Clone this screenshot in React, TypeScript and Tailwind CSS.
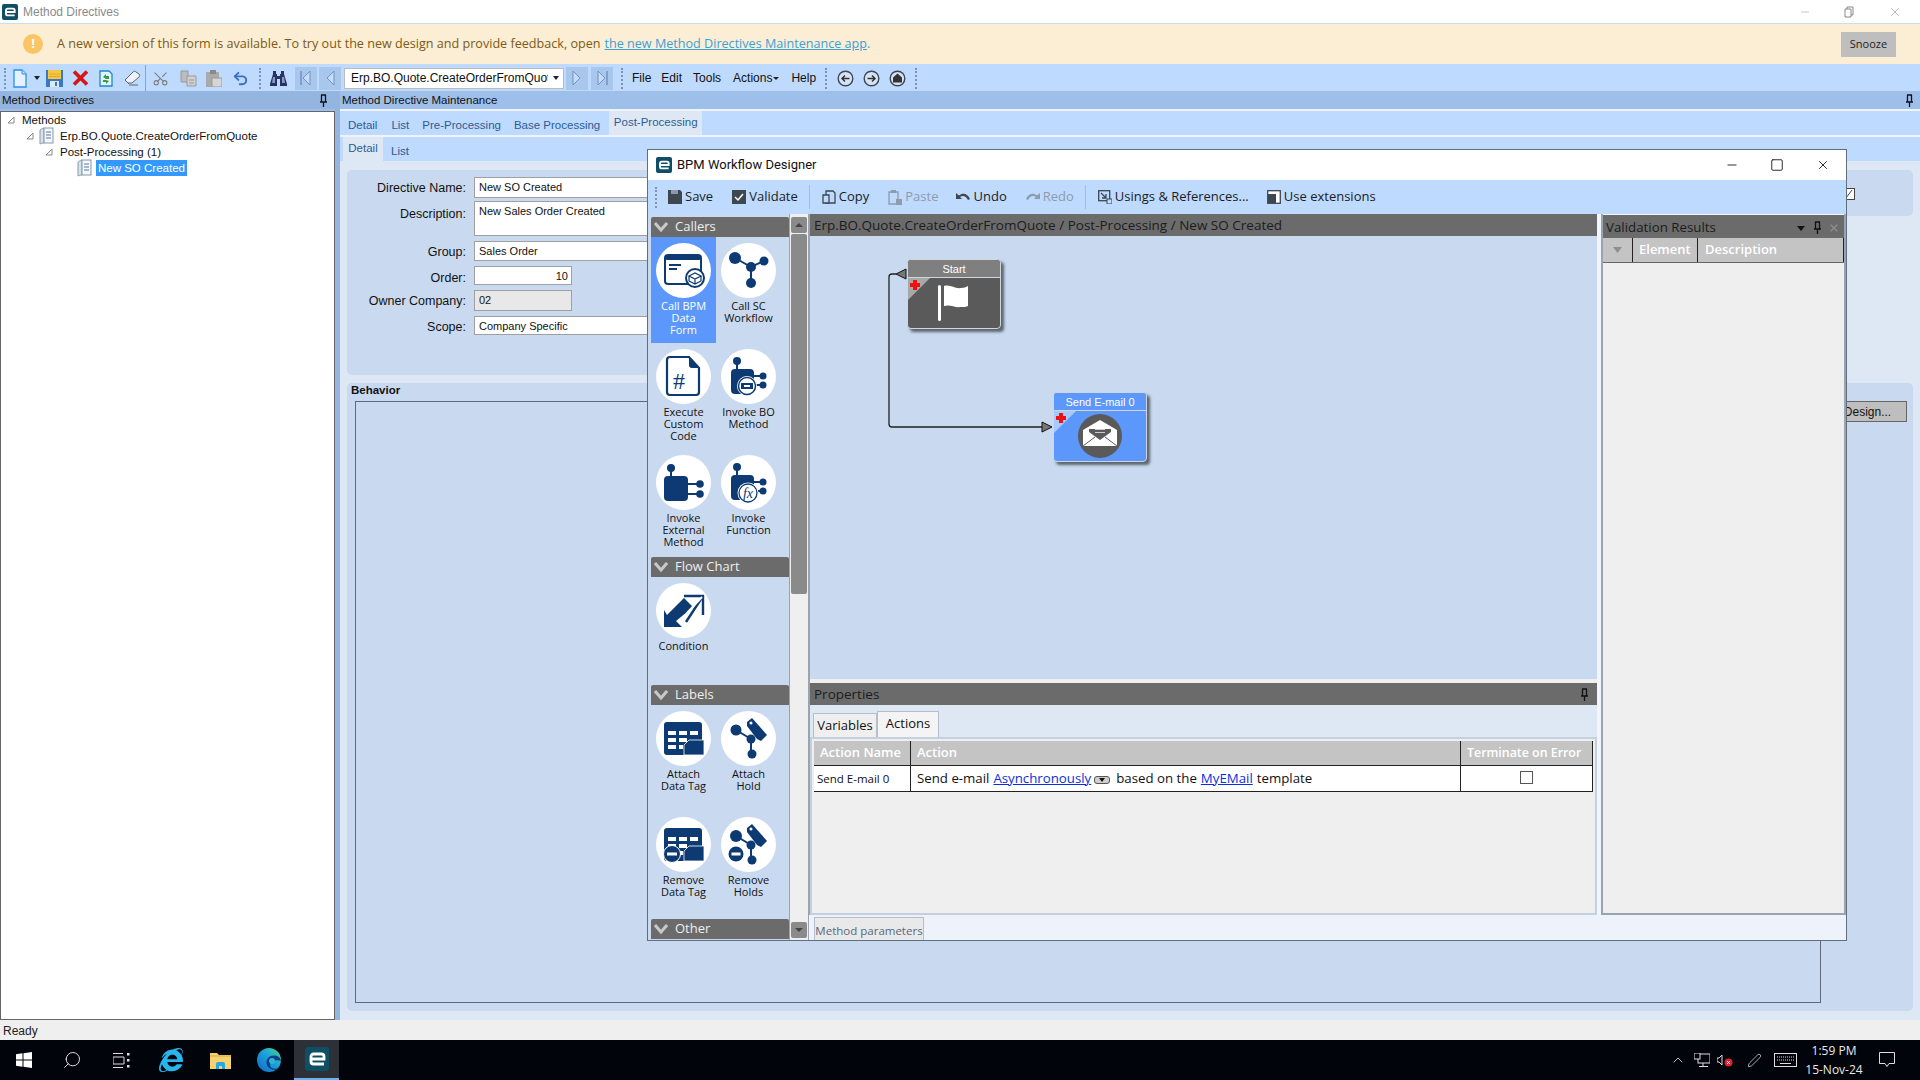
import { Scissors, Undo2, ChevronUp, X, Minus, Square, Search, Pen } from "lucide-react"
import { FaInternetExplorer } from "react-icons/fa"
import type { ReactNode } from "react"

const NAVY = "#0d3a72"

// ---- small shared bits ----

function EpicorLogo({ size = 16 }: { size?: number }) {
  return (
    <svg width={size} height={size} viewBox="0 0 24 24">
      <rect width="24" height="24" rx="3" fill="#0e4f63" />
      <path d="M6 12h13V9.500A2.500 2.500 0 0 0 16.500 7h-8A2.500 2.500 0 0 0 6 9.500v5A2.500 2.500 0 0 0 8.500 17H19" fill="none" stroke="#fff" strokeWidth="2.800" />
    </svg>
  )
}

function PinIcon({ color = "#111" }: { color?: string }) {
  return (
    <svg width="9" height="13" viewBox="0 0 9 13">
      <path d="M2 1h5M2.500 1v7M6.500 1v7M1 8h7M4.500 8v5" fill="none" stroke={color} strokeWidth="1.300" />
    </svg>
  )
}

function TreeArrow() {
  return (
    <svg width="8" height="8" viewBox="0 0 8 8" className="shrink-0">
      <path d="M7 1v6H1z" fill="#fff" stroke="#8a8a8a" />
    </svg>
  )
}

function BookIcon() {
  return (
    <svg width="15" height="18" viewBox="0 0 15 18" className="shrink-0">
      <path d="M1 3c1-1 2-1 4-2v15c-2 0-3 .5-4 1z" fill="#d8e2ee" stroke="#8899aa" />
      <rect x="5" y="1" width="9" height="15" fill="#f4f7fb" stroke="#8899aa" />
      <path d="M7 5h5M7 8h5M7 11h5" stroke="#5577aa" />
    </svg>
  )
}

function Grip() {
  return <div className="h-[21px] w-[2px] shrink-0 border-l-2 border-dotted border-[#7f93ad]" />
}

function Sep({ h = 21, color = "#a7bcd6" }: { h?: number; color?: string }) {
  return <div className="w-px shrink-0" style={{ height: h, backgroundColor: color }} />
}

// ---- main toolbar icons ----

function TbBtn({ w = 26, children }: { w?: number; children: ReactNode }) {
  return <div className="flex h-[26px] shrink-0 items-center justify-center" style={{ width: w }}>{children}</div>
}

function NavBox({ children }: { children: ReactNode }) {
  return <div className="flex h-[23px] w-[22px] shrink-0 items-center justify-center bg-[#a9c6ec]">{children}</div>
}

function NavArrow({ dir, bar }: { dir: "l" | "r"; bar?: boolean }) {
  return (
    <svg width="14" height="18" viewBox="0 0 14 18">
      {dir === "l" ? <path d="M11 2v14L4 9z" fill="#c6dcf8" stroke="#6f93c4" /> : <path d="M3 2v14l7-7z" fill="#c6dcf8" stroke="#6f93c4" />}
      {bar && <path d={dir === "l" ? "M2 2v14" : "M12 2v14"} stroke="#6f93c4" strokeWidth="1.500" />}
    </svg>
  )
}

function CircleNav({ kind }: { kind: "back" | "fwd" | "home" }) {
  return (
    <svg width="17" height="17" viewBox="0 0 17 17">
      <circle cx="8.500" cy="8.500" r="7.300" fill="#d5e4f8" stroke="#3e4650" strokeWidth="1.400" />
      {kind === "back" && <path d="M12.500 8.500H5M8 5.500l-3 3 3 3" fill="none" stroke="#333" strokeWidth="1.500" />}
      {kind === "fwd" && <path d="M4.500 8.500H12M9 5.500l3 3-3 3" fill="none" stroke="#333" strokeWidth="1.500" />}
      {kind === "home" && <path d="M8.500 3.500l4.500 4v5H4v-5z" fill="#333" />}
    </svg>
  )
}

function MainToolbar() {
  return (
    <div className="flex h-[27px] shrink-0 items-center bg-[#bedaff] pt-px pl-[4px] text-[12px] text-[#111]">
      <Grip />
      <TbBtn w={27}>
        <svg width="14" height="19" viewBox="0 0 14 19"><path d="M1 1h8l4 4v13H1z" fill="#e6f2ff" stroke="#2a8fe8" strokeWidth="1.300" /><path d="M9 1v4h4" fill="#cfe4fb" stroke="#2a8fe8" /></svg>
      </TbBtn>
      <TbBtn w={8}><svg width="6" height="4" viewBox="0 0 6 4"><path d="M0 0h6L3 4z" fill="#222" /></svg></TbBtn>
      <TbBtn>
        <svg width="17" height="17" viewBox="0 0 17 17"><rect x="0" y="0" width="17" height="17" fill="#3b78c4" /><rect x="2" y="0" width="13" height="9" fill="#f5c842" /><path d="M3 4h11M3 6.500h11" stroke="#e8a52a" /><rect x="4" y="11" width="9" height="6" fill="#dfe8f2" /><rect x="9" y="12" width="2" height="4" fill="#3b78c4" /></svg>
      </TbBtn>
      <TbBtn>
        <svg width="17" height="16" viewBox="0 0 17 16"><path d="M2 1.500l13 13M15 1.500L2 14.500" stroke="#d81515" strokeWidth="3.600" /></svg>
      </TbBtn>
      <TbBtn>
        <svg width="14" height="17" viewBox="0 0 14 17"><path d="M1 1h9l3 3v12H1z" fill="#e4f3fb" stroke="#1c86d0" strokeWidth="1.300" /><path d="M4 7l3-3v2h3v3H7v0zM10 11l-3 3v-2H4v-2h3z" fill="#2f9e44" /></svg>
      </TbBtn>
      <TbBtn>
        <svg width="17" height="16" viewBox="0 0 17 16"><path d="M1 10l8-8c1-1 2-1 3 0l3 2c1 1 1 2 0 3l-7 6H4z" fill="#eef1f5" stroke="#5d6774" /><path d="M1 10l4 4M5 15h9" stroke="#5d6774" /></svg>
      </TbBtn>
      <Sep h={26} color="#8ea3bd" />
      <TbBtn w={29}><Scissors size={17} color="#7d7d7d" strokeWidth={1.500} className="-rotate-90" /></TbBtn>
      <TbBtn>
        <svg width="17" height="17" viewBox="0 0 17 17"><path d="M1 1h7v11H1z" fill="#bcbcbc" stroke="#999" /><path d="M7 6h9v10H7z" fill="#d0d0d0" stroke="#999" /><path d="M9 10h5M9 13h5" stroke="#999" /></svg>
      </TbBtn>
      <TbBtn>
        <svg width="16" height="17" viewBox="0 0 16 17"><rect x="0" y="2" width="13" height="15" fill="#aaa" /><rect x="4" y="0" width="6" height="4" fill="#8a8a8a" /><rect x="6" y="8" width="10" height="9" fill="#d6d6d6" stroke="#999" /></svg>
      </TbBtn>
      <TbBtn w={27}><Undo2 size={17} color="#3f6fc0" strokeWidth={2.800} /></TbBtn>
      <div className="flex w-[12px] shrink-0 justify-center"><Grip /></div>
      <TbBtn w={24}>
        <svg width="17" height="15" viewBox="0 0 17 15"><path d="M3 0h3v3h1v2h3V3h1V0h3v3l3 10v2h-7V8H7v7H0v-2L3 3z" fill="#2a3360" /><path d="M3 6l-1 6h3V6zM12 6v6h3l-1-6z" fill="#8d97c4" /></svg>
      </TbBtn>
      <div className="ml-[5px] flex gap-[2px]">
        <NavBox><NavArrow dir="l" bar /></NavBox>
        <NavBox><NavArrow dir="l" /></NavBox>
      </div>
      <div className="ml-[3px] flex h-[21px] w-[220px] shrink-0 items-center border border-[#bbb] bg-white pl-[6px] text-[12px]">
        <span className="w-[197px] overflow-hidden whitespace-nowrap">Erp.BO.Quote.CreateOrderFromQuote</span>
        <svg width="6" height="4" viewBox="0 0 6 4" className="ml-[5px]"><path d="M0 0h6L3 4z" fill="#222" /></svg>
      </div>
      <div className="ml-[2px] flex gap-[3px]">
        <NavBox><NavArrow dir="r" /></NavBox>
        <NavBox><NavArrow dir="r" bar /></NavBox>
      </div>
      <div className="ml-[8px]"><Grip /></div>
      <span className="ml-[9px]">File</span>
      <span className="ml-[10px]">Edit</span>
      <span className="ml-[11px]">Tools</span>
      <span className="ml-[12px] flex items-center gap-[1px]">Actions<svg width="6" height="3" viewBox="0 0 6 3"><path d="M0 0h6L3 3z" fill="#222" /></svg></span>
      <span className="ml-[12px]">Help</span>
      <div className="ml-[9px]"><Grip /></div>
      <div className="ml-[10px] flex gap-[9px]">
        <CircleNav kind="back" />
        <CircleNav kind="fwd" />
        <CircleNav kind="home" />
      </div>
      <div className="ml-[9px]"><Grip /></div>
    </div>
  )
}

// ---- method directive form ----

function Field({ label, h, mt, lift = 0, children }: { label: string; h: number; mt: number; lift?: number; children: ReactNode }) {
  return (
    <div className="flex items-start gap-[8px]" style={{ marginTop: mt, height: h }}>
      <div className="w-[119px] text-right text-[12.500px] leading-[14px] text-[#111]" style={{ paddingTop: 4 + lift }}>{label}</div>
      {children}
    </div>
  )
}

function Input({ children, w = 600, className = "bg-white" }: { children: ReactNode; w?: number; className?: string }) {
  return <div className={`h-full border border-[#a0a0a0] pt-[1px] pl-[4px] text-[11px] leading-[16px] text-[#111] ${className}`} style={{ width: w }}>{children}</div>
}

function FormArea() {
  return (
    <div className="flex min-h-0 flex-1 flex-col bg-[#dee8f5] pt-[9px] pr-[7px] pb-[9px] pl-[7px]">
      <div className="flex items-start">
        <div className="h-[205px] w-[900px] shrink-0 rounded-[5px] bg-[#c9daf0] pt-[7px]">
          <Field label="Directive Name:" h={21} mt={0}><Input>New SO Created</Input></Field>
          <Field label="Description:" h={35} mt={4} lift={1}><Input className="-mt-px bg-white">New Sales Order Created</Input></Field>
          <Field label="Group:" h={20} mt={4}><Input>Sales Order</Input></Field>
          <Field label="Order:" h={19} mt={5} lift={1}><Input w={98} className="bg-white pr-[3px] text-right">10</Input></Field>
          <Field label="Owner Company:" h={21} mt={5}><Input w={98} className="bg-[#e8e8e8]">02</Input></Field>
          <Field label="Scope:" h={19} mt={5}><Input>Company Specific</Input></Field>
        </div>
        <div className="flex h-[46px] flex-1 items-start justify-end rounded-[5px] bg-[#c9daf0] pt-[18px] pr-[58px]">
          <svg width="12" height="12" viewBox="0 0 12 12"><rect x=".5" y=".5" width="11" height="11" fill="#fff" stroke="#444" /><path d="M3 10l6-8" stroke="#444" /></svg>
        </div>
      </div>
      <div className="mt-[8px] flex min-h-0 flex-1 flex-col rounded-[5px] bg-[#c9daf0]">
        <div className="h-[18px] pl-[4px] text-[11.500px] leading-[14px] font-bold text-[#111]">Behavior</div>
        <div className="flex min-h-0 flex-1 pb-[8px] pl-[8px]">
          <div className="w-[1466px] border border-[#5f6a78]" />
          <div className="ml-[7px] flex h-[21px] w-[79px] items-center justify-center border border-[#666] bg-[#bebebe] text-[12px] text-[#111]">Design...</div>
        </div>
      </div>
    </div>
  )
}

function MethodPanel() {
  const tabs = "text-[11.500px] text-[#2c5c94]"
  return (
    <div className="flex min-w-0 flex-1 flex-col bg-[#f0f4fa]">
      <div className="flex h-[18px] shrink-0 items-center justify-between bg-[#9dbfea] pt-px pr-[6px] pl-[2px] text-[11.500px] text-[#111]">
        <span>Method Directive Maintenance</span>
        <PinIcon />
      </div>
      <div className={`mt-[2px] flex h-[24px] shrink-0 items-center bg-[#bedaff] pl-[8px] ${tabs}`}>
        <span className="pt-[5px]">Detail</span>
        <span className="ml-[14px] pt-[5px]">List</span>
        <span className="ml-[13px] pt-[5px]">Pre-Processing</span>
        <span className="ml-[13px] pt-[5px]">Base Processing</span>
        <span className="ml-[9px] flex h-[24px] w-[93px] items-center justify-center bg-[#dee8f5]">Post-Processing</span>
      </div>
      <div className={`mt-[2px] flex h-[24px] shrink-0 items-center bg-[#bedaff] pl-[3px] ${tabs}`}>
        <span className="flex h-[24px] w-[40px] items-center justify-center bg-[#dee8f5]">Detail</span>
        <span className="ml-[8px] pt-[5px]">List</span>
      </div>
      <FormArea />
    </div>
  )
}

function TreePanel() {
  return (
    <div className="flex w-[335px] shrink-0 flex-col">
      <div className="flex h-[18px] shrink-0 items-center justify-between bg-[#94b5e0] pt-px pr-[7px] pl-[2px] text-[11.500px] text-[#111]">
        <span>Method Directives</span>
        <PinIcon />
      </div>
      <div className="mt-[2px] flex min-h-0 flex-1 flex-col border border-[#666] bg-white text-[11.500px] leading-[16px] text-[#111]">
        <div className="flex h-[16px] items-center pl-[6px]"><TreeArrow /><span className="ml-[7px]">Methods</span></div>
        <div className="flex h-[16px] items-center pl-[25px]"><TreeArrow /><span className="ml-[5px]"><BookIcon /></span><span className="ml-[6px]">Erp.BO.Quote.CreateOrderFromQuote</span></div>
        <div className="flex h-[16px] items-center pl-[44px]"><TreeArrow /><span className="ml-[7px]">Post-Processing (1)</span></div>
        <div className="flex h-[16px] items-center pl-[76px]"><BookIcon /><span className="ml-[4px] bg-[#3399ff] px-[2px] text-white">New SO Created</span></div>
      </div>
    </div>
  )
}

// ---- palette glyphs, all on a 55x55 field ----

function PaletteGlyph({ name }: { name: string }) {
  const n = NAVY
  const pinBlock = (
    <>
      <circle cx="16" cy="12" r="4" fill={n} />
      <path d="M16 12v9" stroke={n} strokeWidth="2" />
      <rect x="10" y="20" width="23" height="25" rx="4" fill={n} />
      <path d="M33 27h9M33 36h9" stroke={n} strokeWidth="1.800" />
      <circle cx="42" cy="27" r="3.500" fill={n} />
      <circle cx="42" cy="36" r="3.500" fill={n} />
    </>
  )
  const hold = (
    <>
      <path d="M15 19l15 9v15" fill="none" stroke={n} strokeWidth="2" />
      <circle cx="30" cy="28" r="4.500" fill={n} />
      <circle cx="31" cy="43" r="4.500" fill={n} />
      <path d="M26 11l5-4 15 17-6 6-4-2-10-13z" fill={n} />
      <circle cx="30" cy="12" r="1.500" fill="#fff" />
    </>
  )
  const dataTable = (
    <>
      <rect x="8" y="11" width="38" height="33" rx="3" fill={n} />
      <g fill="#fff">
        <rect x="12" y="20" width="8" height="4" /><rect x="23" y="20" width="8" height="4" /><rect x="34" y="20" width="8" height="4" />
        <rect x="12" y="27" width="8" height="4" /><rect x="23" y="27" width="8" height="4" />
        <rect x="12" y="34" width="8" height="4" /><rect x="23" y="34" width="4" height="4" />
      </g>
      <path d="M28 44V34l5-5h15v15z" fill={n} stroke="#fff" strokeWidth=".800" />
    </>
  )
  switch (name) {
    case "bpm":
      return (
        <>
          <rect x="9" y="12" width="36" height="29" rx="3" fill="none" stroke={n} strokeWidth="2" />
          <rect x="9" y="12" width="36" height="5" rx="2" fill={n} />
          <path d="M13 22h12M13 26h8" stroke={n} strokeWidth="1.800" />
          <circle cx="39" cy="35" r="9" fill="#fff" stroke={n} strokeWidth="2" />
          <path d="M33 33l6-3 6 3-6 3zM33 33v5l6 3 6-3v-5M39 36v5" fill="none" stroke={n} strokeWidth="1.200" />
        </>
      )
    case "sc":
      return (
        <>
          <path d="M14 15l16 9 13-6M30 24v16" fill="none" stroke={n} strokeWidth="2" />
          <circle cx="14" cy="15" r="6" fill={n} /><circle cx="30" cy="24" r="5" fill={n} />
          <circle cx="43" cy="18" r="4.500" fill={n} /><circle cx="30" cy="40" r="5" fill={n} />
        </>
      )
    case "code":
      return (
        <>
          <path d="M14 8h19l10 11v24a3 3 0 0 1-3 3H14a3 3 0 0 1-3-3V11a3 3 0 0 1 3-3z" fill="#fff" stroke={n} strokeWidth="2.200" />
          <path d="M33 8v8a3 3 0 0 0 3 3h7z" fill={n} />
          <text x="23" y="40" fontSize="24" fontFamily="Liberation Serif, serif" textAnchor="middle" fill={n}>#</text>
        </>
      )
    case "bo":
      return (
        <>
          {pinBlock}
          <circle cx="26" cy="37" r="10" fill="#fff" />
          <circle cx="26" cy="37" r="8.500" fill="none" stroke={n} strokeWidth="1.500" />
          <rect x="20" y="34" width="12" height="6" fill={n} />
          <rect x="23" y="36" width="6" height="2" fill="#fff" />
        </>
      )
    case "ext":
      return (
        <>
          <circle cx="15" cy="13" r="4" fill={n} />
          <path d="M15 13v9" stroke={n} strokeWidth="2" />
          <rect x="8" y="21" width="24" height="25" rx="4" fill={n} />
          <path d="M32 29h12M32 39h12" stroke={n} strokeWidth="1.800" />
          <circle cx="44" cy="29" r="3.800" fill={n} /><circle cx="44" cy="39" r="3.800" fill={n} />
        </>
      )
    case "fn":
      return (
        <>
          {pinBlock}
          <circle cx="27" cy="38" r="10.500" fill="#fff" />
          <circle cx="27" cy="38" r="9" fill="none" stroke={n} strokeWidth="1.300" />
          <text x="27" y="43" fontSize="14" fontStyle="italic" fontFamily="Liberation Serif, serif" textAnchor="middle" fill={n}>fx</text>
        </>
      )
    case "cond":
      return (
        <>
          <path d="M8 27v17h18l-6-6 17-14-9-9-17 17z" fill={n} />
          <path d="M28 13h19v19" fill="none" stroke={n} strokeWidth="2.400" />
          <path d="M47 13L30 39" fill="none" stroke={n} strokeWidth="2.400" />
          <path d="M46 14L31 30" fill="none" stroke="#fff" strokeWidth="2" />
        </>
      )
    case "attachTag":
      return dataTable
    case "attachHold":
      return (
        <>
          <circle cx="15" cy="19" r="5.500" fill={n} />
          {hold}
        </>
      )
    case "removeTag":
      return (
        <>
          {dataTable}
          <circle cx="16" cy="37" r="8.500" fill={n} stroke="#fff" strokeWidth="1" />
          <rect x="11" y="35.500" width="10" height="3" fill="#fff" />
        </>
      )
    default:
      return (
        <>
          <circle cx="15" cy="19" r="6" fill={n} />
          {hold}
          <circle cx="15" cy="37" r="7.500" fill={n} />
          <rect x="10.500" y="35.500" width="9" height="3" fill="#fff" />
        </>
      )
  }
}

function PaletteItem({ name, lines, active }: { name: string; lines: string[]; active?: boolean }) {
  return (
    <div className={`flex h-[106px] w-[65px] flex-col items-center pt-[6px] ${active ? "bg-[#5c97fb] text-white" : "text-[#111]"}`}>
      <svg width="55" height="55" viewBox="0 0 55 55" className="shrink-0">
        <circle cx="27.500" cy="27.500" r="27.500" fill="#fff" />
        <PaletteGlyph name={name} />
      </svg>
      <div className="mt-[2px] text-center text-[11px] leading-[12px]">
        {lines.map((l) => <div key={l}>{l}</div>)}
      </div>
    </div>
  )
}

function SectionHead({ label, mt = 0 }: { label: string; mt?: number }) {
  return (
    <div className="flex h-[20px] shrink-0 items-center rounded-t-[2px] bg-[#6b6b6b] pl-[3px] text-[13px] text-[#efefef]" style={{ marginTop: mt }}>
      <svg width="14" height="11" viewBox="0 0 14 11"><path d="M1 1l6 7 6-7" fill="none" stroke="#c8c8c8" strokeWidth="3" /></svg>
      <span className="ml-[7px]">{label}</span>
    </div>
  )
}

function Palette() {
  return (
    <div className="flex w-[161px] shrink-0 bg-[#c9daf0] pt-[3px] pl-[3px]">
      <div className="flex w-[138px] flex-col">
        <SectionHead label="Callers" />
        <div className="flex h-[317px] shrink-0 flex-wrap content-start pl-0">
          <PaletteItem name="bpm" lines={["Call BPM", "Data", "Form"]} active />
          <PaletteItem name="sc" lines={["Call SC", "Workflow"]} />
          <PaletteItem name="code" lines={["Execute", "Custom", "Code"]} />
          <PaletteItem name="bo" lines={["Invoke BO", "Method"]} />
          <PaletteItem name="ext" lines={["Invoke", "External", "Method"]} />
          <PaletteItem name="fn" lines={["Invoke", "Function"]} />
        </div>
        <SectionHead label="Flow Chart" mt={3} />
        <div className="h-[108px] shrink-0"><PaletteItem name="cond" lines={["Condition"]} /></div>
        <SectionHead label="Labels" />
        <div className="flex h-[212px] shrink-0 flex-wrap content-start">
          <PaletteItem name="attachTag" lines={["Attach", "Data Tag"]} />
          <PaletteItem name="attachHold" lines={["Attach", "Hold"]} />
          <PaletteItem name="removeTag" lines={["Remove", "Data Tag"]} />
          <PaletteItem name="removeHolds" lines={["Remove", "Holds"]} />
        </div>
        <SectionHead label="Other" mt={2} />
      </div>
      <div className="mt-[-3px] ml-0 flex w-[20px] shrink-0 flex-col items-center border-x border-[#9aa4ae] bg-[#efefef] pt-[3px] pb-[2px]">
        <div className="flex h-[16px] w-[16px] items-center justify-center rounded-[2px] bg-[#8a8a8a]">
          <svg width="8" height="4" viewBox="0 0 8 4"><path d="M0 4h8L4 0z" fill="#444" /></svg>
        </div>
        <div className="mt-[1px] h-[360px] w-[16px] rounded-[2px] bg-[#8a8a8a]" />
        <div className="mt-auto flex h-[16px] w-[16px] items-center justify-center rounded-[2px] bg-[#8a8a8a]">
          <svg width="8" height="4" viewBox="0 0 8 4"><path d="M0 0h8L4 4z" fill="#444" /></svg>
        </div>
      </div>
    </div>
  )
}

// ---- workflow canvas ----

function WfNode({ title, active, left, top, children }: { title: string; active?: boolean; left: string; top: string; children: ReactNode }) {
  return (
    <div className={`absolute ${left} ${top} flex h-[70px] w-[94px] flex-col overflow-hidden rounded-[4px] border border-[#d0d6de] shadow-[3px_3px_3px_rgba(0,0,0,0.55)] ${active ? "bg-[#5c97fb]" : "bg-[#5a5a5a]"}`}>
      <div className={`flex h-[18px] shrink-0 items-center justify-center border-b border-[#d0d6de] pt-px font-['Liberation_Sans',sans-serif] text-[11px] text-white ${active ? "bg-[#5c97fb]" : "bg-[#7f7f7f]"}`}>{title}</div>
      <div className="relative flex-1">
        <div className={`absolute top-0 left-0 h-[22px] w-[22px] ${active ? "bg-[#a9c8fb]" : "bg-[#a8a8a8]"} [clip-path:polygon(0_0,100%_0,0_100%)]`} />
        <svg width="12" height="12" viewBox="0 0 12 12" className="absolute top-[1px] left-[1px]"><path d="M4 1h4v3h3v4H8v3H4V8H1V4h3z" fill="#f01010" /></svg>
        {children}
      </div>
    </div>
  )
}

function Canvas() {
  return (
    <div className="relative h-[443px] shrink-0 bg-[#c9daf0]">
      <svg width="260" height="210" viewBox="0 0 260 210" className="absolute top-0 left-0">
        <path d="M86 38h-4a3 3 0 0 0-3 3v147a3 3 0 0 0 3 3h150" fill="none" stroke="#222" strokeWidth="1.300" />
        <path d="M96 33v10l-10-5z" fill="#777" stroke="#111" />
        <path d="M232 186v10l10-5z" fill="#777" stroke="#111" />
      </svg>
      <WfNode title="Start" left="left-[97px]" top="top-[23px]">
        <svg width="34" height="38" viewBox="0 0 34 38" className="absolute top-[5px] left-[29px]">
          <rect x="1" y="2" width="3" height="36" rx="1.500" fill="#fff" />
          <path d="M7 3c7-2 10 3 17 2 3 0 5-1 7-2v20c-2 1-4 1-7 1-7 1-10-3-17-1z" fill="#fff" />
        </svg>
      </WfNode>
      <WfNode title="Send E-mail 0" active left="left-[243px]" top="top-[156px]">
        <svg width="44" height="44" viewBox="0 0 44 44" className="absolute top-[3px] left-[24px]">
          <circle cx="22" cy="22" r="22" fill="#5a5a5a" />
          <path d="M5 16L22 6l17 10v16H5z" fill="#fff" />
          <path d="M11 15h22v3l-11 8-11-8z" fill="#5a5a5a" />
          <path d="M17 15.500h10M17 18.500h10" stroke="#ccc" strokeWidth="1" />
          <path d="M5 32l12-9M39 32l-12-9" stroke="#5a5a5a" strokeWidth="1" />
        </svg>
      </WfNode>
    </div>
  )
}

function PropsGrid() {
  return (
    <div className="flex min-h-0 flex-1 flex-col border-2 border-[#c4cfdf] bg-[#efefef] p-[2px]">
      <div className="flex h-[24px] shrink-0 bg-[#c4c4c4] text-[13px] font-semibold text-white">
        <div className="flex w-[97px] items-center border-r border-[#222] pl-[6px]">Action Name</div>
        <div className="flex w-[550px] items-center border-r border-[#222] pl-[6px]">Action</div>
        <div className="flex flex-1 items-center border-r border-[#222] pl-[6px] text-[12.400px]">Terminate on Error</div>
      </div>
      <div className="flex h-[27px] shrink-0 border-y border-[#222] bg-white text-[#111]">
        <div className="flex w-[97px] items-center border-r border-[#222] pl-[3px] text-[11.500px]">Send E-mail 0</div>
        <div className="flex w-[550px] items-center border-r border-[#222] pl-[6px] text-[13.250px]">
          <span>Send e-mail</span>
          <span className="ml-[4px] text-[#0a2fe0] underline">Asynchronously</span>
          <span className="mt-[3px] ml-[3px] flex h-[8px] w-[16px] items-center justify-center rounded-[3px] border border-[#555] bg-[#cfcfcf]">
            <svg width="6" height="4" viewBox="0 0 6 4"><path d="M0 0h6L3 4z" fill="#111" /></svg>
          </span>
          <span className="ml-[6px]">based on the</span>
          <span className="ml-[4px] text-[#0a2fe0] underline">MyEMail</span>
          <span className="ml-[4px]">template</span>
        </div>
        <div className="flex flex-1 items-center justify-center border-r border-[#222] pb-[2px]">
          <div className="h-[13px] w-[13px] border border-[#555] bg-white" />
        </div>
      </div>
    </div>
  )
}

function CenterColumn() {
  return (
    <div className="flex w-[788px] shrink-0 flex-col border-l border-[#9aa4ae]">
      <div className="flex h-[22px] shrink-0 items-center bg-[#6b6b6b] pt-[1px] pl-[4px] text-[13.500px] text-[#1c1c1c]">
        Erp.BO.Quote.CreateOrderFromQuote / Post-Processing / New SO Created
      </div>
      <Canvas />
      <div className="h-[4px] shrink-0 bg-[#efefef]" />
      <div className="flex h-[22px] shrink-0 items-center justify-between bg-[#6b6b6b] pr-[8px] pl-[4px] text-[13.500px] text-[#1c1c1c]">
        <span>Properties</span>
        <PinIcon />
      </div>
      <div className="flex min-h-0 flex-1 flex-col bg-[#dee8f5]">
        <div className="flex h-[32px] shrink-0 items-end pl-[3px] text-[13px] text-[#111]">
          <div className="flex h-[24px] w-[64px] items-center justify-center border border-b-0 border-[#b5bec9] bg-[#efefef]">Variables</div>
          <div className="flex h-[26px] w-[62px] items-center justify-center border border-b-0 border-[#b5bec9] bg-[#f4f4f4] pb-[2px]">Actions</div>
        </div>
        <PropsGrid />
      </div>
    </div>
  )
}

function ValidationPanel() {
  return (
    <div className="ml-[4px] flex min-w-0 flex-1 flex-col border-x-2 border-b-2 border-[#9aa4ae]">
      <div className="mt-px flex h-[23px] shrink-0 items-center bg-[#6b6b6b] pt-[2px] pl-[3px] text-[13.300px] text-[#1c1c1c]">
        <span>Validation Results</span>
        <svg width="8" height="5" viewBox="0 0 8 5" className="mt-[2px] ml-auto"><path d="M0 0h8L4 5z" fill="#111" /></svg>
        <span className="ml-[8px]"><PinIcon /></span>
        <X size={12} color="#8f8f8f" strokeWidth={2.500} className="mr-[4px] ml-[6px]" />
      </div>
      <div className="flex h-[25px] shrink-0 border-b border-[#666] bg-[#c4c4c4] text-[13px] font-semibold text-white">
        <div className="flex w-[30px] items-center justify-center border-r border-[#222]">
          <svg width="9" height="6" viewBox="0 0 9 6"><path d="M0 0h9L4.500 6z" fill="#8f8f8f" /></svg>
        </div>
        <div className="flex w-[65px] items-center border-r border-[#222] pl-[6px]">Element</div>
        <div className="flex flex-1 items-center border-r border-[#222] pl-[7px]">Description</div>
      </div>
      <div className="flex-1 bg-[#efefef]" />
    </div>
  )
}

function TbItem({ icon, label, off, ml = 0 }: { icon: ReactNode; label: string; off?: boolean; ml?: number }) {
  return (
    <div className={`flex items-center gap-[3px] ${off ? "text-[#8e9bab]" : "text-[#1c1c1c]"}`} style={{ marginLeft: ml }}>
      {icon}
      <span>{label}</span>
    </div>
  )
}

function BpmWindow() {
  return (
    <div className="absolute top-[149px] left-[647px] flex h-[792px] w-[1200px] flex-col border border-[#5f6f80] bg-white font-['Open_Sans',sans-serif]">
      <div className="flex h-[30px] shrink-0 items-center bg-white pl-[8px] text-[13px] text-[#111]">
        <EpicorLogo />
        <span className="ml-[5px] font-['Roboto',sans-serif]">BPM Workflow Designer</span>
        <Minus size={14} color="#111" strokeWidth={1.500} className="ml-auto" />
        <Square size={14} color="#111" strokeWidth={1.500} className="ml-[31px]" />
        <X size={14} color="#111" strokeWidth={1.500} className="mr-[16px] ml-[32px]" />
      </div>
      <div className="flex h-[34px] shrink-0 items-center bg-[#bedaff] pl-[7px] text-[13px]">
        <Grip />
        <TbItem ml={11} label="Save" icon={<svg width="14" height="14" viewBox="0 0 14 14"><path d="M0 0h12l2 2v12H0z" fill="#3e4650" /><rect x="3" y="0" width="7" height="4" fill="#8e97a3" /></svg>} />
        <TbItem ml={19} label="Validate" icon={<svg width="14" height="14" viewBox="0 0 14 14"><rect width="14" height="14" fill="#3e4650" /><path d="M3 7l3 3 5-6" fill="none" stroke="#fff" strokeWidth="1.500" /></svg>} />
        <div className="ml-[11px]"><Sep h={24} /></div>
        <TbItem ml={12} label="Copy" icon={<svg width="14" height="14" viewBox="0 0 14 14"><path d="M4 1h7l2 2v10H4z" fill="#bedaff" stroke="#3e4650" strokeWidth="1.300" /><path d="M1 5h6v8H1z" fill="#bedaff" stroke="#3e4650" strokeWidth="1.300" /></svg>} />
        <TbItem ml={19} off label="Paste" icon={<svg width="14" height="15" viewBox="0 0 14 15"><path d="M1 2h9v12H1z" fill="none" stroke="#8e9bab" strokeWidth="1.300" /><rect x="3" y="0" width="5" height="3" fill="#8e9bab" /><rect x="8" y="9" width="6" height="6" fill="#8e9bab" /></svg>} />
        <TbItem ml={18} label="Undo" icon={<svg width="14" height="9" viewBox="0 0 14 9"><path d="M0 0v6h6L4 4c3-2 6-1 8 3l2-1C12 1 7-1 3 2.500z" fill="#3e4650" /></svg>} />
        <TbItem ml={19} off label="Redo" icon={<svg width="14" height="9" viewBox="0 0 14 9"><path d="M14 0v6H8l2-2C7 2 4 3 2 7L0 6c2-5 7-7 11-3.500z" fill="#8e9bab" /></svg>} />
        <div className="ml-[11px]"><Sep h={24} /></div>
        <TbItem ml={12} label="Usings & References..." icon={<svg width="14" height="14" viewBox="0 0 14 14"><rect x=".7" y=".7" width="11" height="10" fill="none" stroke="#3e4650" strokeWidth="1.300" /><path d="M3 3l5 5M8 4v4H4" fill="none" stroke="#3e4650" strokeWidth="1.300" /><rect x="9" y="9" width="5" height="5" fill="#bedaff" stroke="#3e4650" /></svg>} />
        <TbItem ml={18} label="Use extensions" icon={<svg width="14" height="14" viewBox="0 0 14 14"><rect x=".7" y=".7" width="12.600" height="12.600" fill="#fff" stroke="#3e4650" strokeWidth="1.300" /><rect x="1" y="4" width="8" height="9" fill="#3e4650" /></svg>} />
      </div>
      <div className="flex min-h-0 flex-1 bg-[#f2f6fc]">
        <Palette />
        <div className="flex min-w-0 flex-1 flex-col">
          <div className="flex min-h-0 flex-1">
            <CenterColumn />
            <ValidationPanel />
          </div>
          <div className="flex h-[25px] shrink-0 items-end bg-[#eef2fb] pl-[5px]">
            <div className="flex h-[23px] w-[110px] items-center justify-center border border-b-0 border-[#b5bec9] bg-[#e9e9e9] pt-[3px] text-[11.500px] text-[#56687e]">Method parameters</div>
          </div>
        </div>
      </div>
    </div>
  )
}

// ---- taskbar ----

function EdgeIcon() {
  return (
    <svg width="24" height="24" viewBox="0 0 24 24">
      <defs>
        <linearGradient id="edgeg" x1="0" y1="1" x2="1" y2="0">
          <stop offset="0" stopColor="#1166c8" />
          <stop offset=".6" stopColor="#1ca8d8" />
          <stop offset="1" stopColor="#52d67a" />
        </linearGradient>
      </defs>
      <circle cx="12" cy="12" r="12" fill="url(#edgeg)" />
      <path d="M24 13c-1-6-9-7-13-3-4 5 0 12 7 12 2 0 3-1 4-2-5 2-9 0-9-3 0-4 7-6 11-4z" fill="#0b3f86" />
      <circle cx="15" cy="13" r="3" fill="#2fb4d8" />
    </svg>
  )
}

function TrayCell({ w, children }: { w: number; children: ReactNode }) {
  return <div className="flex shrink-0 justify-center" style={{ width: w }}>{children}</div>
}

function Taskbar() {
  return (
    <div className="flex h-[40px] shrink-0 items-center bg-[#01040a] text-white">
      <div className="flex w-[48px] justify-center">
        <svg width="16" height="16" viewBox="0 0 16 16"><path d="M0 2.200L6.500 1.300V7.500H0zM7.500 1.200L16 0V7.500H7.500zM0 8.500H6.500V14.700L0 13.800zM7.500 8.500H16V16L7.500 14.800z" fill="#fff" /></svg>
      </div>
      <div className="flex w-[48px] justify-center"><Search size={20} color="#ddd" strokeWidth={1.200} className="-scale-x-100" /></div>
      <div className="flex w-[50px] justify-center">
        <svg width="17" height="15" viewBox="0 0 17 15"><path d="M0 .5h10M0 14.500h10M0 4h11v7H0z" fill="none" stroke="#ddd" /><rect x="14" y="0" width="2.500" height="2.500" fill="#ddd" /><rect x="14" y="6" width="2.500" height="2.500" fill="#ddd" /><rect x="14" y="12" width="2.500" height="2.500" fill="#ddd" /></svg>
      </div>
      <div className="relative flex w-[50px] justify-center">
        <FaInternetExplorer size={24} color="#28b5ec" />
      </div>
      <div className="flex w-[48px] justify-center">
        <svg width="21" height="18" viewBox="0 0 21 18"><path d="M0 2h7l2 2h12v14H0z" fill="#f5d26c" /><path d="M0 5h21" stroke="#d9a93c" /><path d="M6 18v-5a2 2 0 0 1 2-2h5a2 2 0 0 1 2 2v5h-3v-3H9v3z" fill="#2aa6e0" /></svg>
      </div>
      <div className="flex w-[50px] justify-center"><EdgeIcon /></div>
      <div className="flex h-[40px] w-[45px] items-center justify-center border-b-[2px] border-[#6fb0ee] bg-[#2d3036]"><EpicorLogo size={24} /></div>
      <div className="ml-auto flex items-center pr-[16px]">
        <TrayCell w={24}><ChevronUp size={16} color="#ddd" strokeWidth={1.300} /></TrayCell>
        <TrayCell w={24}>
          <svg width="16" height="14" viewBox="0 0 16 14"><rect x="4" y="1" width="12" height="9" fill="none" stroke="#ddd" /><rect x="0" y="0" width="6" height="6" fill="#01040a" stroke="#ddd" /><path d="M9 10v3M5 13.500h9" stroke="#ddd" /></svg>
        </TrayCell>
        <TrayCell w={22}>
          <svg width="17" height="14" viewBox="0 0 17 14"><path d="M0 5h2l3-3v10L2 9H0z" fill="none" stroke="#ddd" /><circle cx="11.500" cy="9.500" r="4" fill="#e0202e" /><path d="M10 8l3 3M13 8l-3 3" stroke="#fff" /></svg>
        </TrayCell>
        <TrayCell w={36}><Pen size={15} color="#ddd" strokeWidth={1.200} /></TrayCell>
        <TrayCell w={26}>
          <svg width="23" height="14" viewBox="0 0 23 14"><rect x=".5" y=".5" width="22" height="13" fill="none" stroke="#ddd" /><path d="M3 4h17M3 7h17" stroke="#ddd" strokeDasharray="1 1" /><path d="M6 10.500h11" stroke="#ddd" /></svg>
        </TrayCell>
        <div className="flex w-[72px] shrink-0 flex-col items-center font-['Open_Sans',sans-serif] text-[12px] leading-[19px] text-[#e8e8e8]">
          <span>1:59 PM</span>
          <span>15-Nov-24</span>
        </div>
        <TrayCell w={34}>
          <svg width="16" height="16" viewBox="0 0 16 16"><path d="M.5.5h15v11H10l-2 3-2-3H.5z" fill="none" stroke="#ddd" /></svg>
        </TrayCell>
      </div>
    </div>
  )
}

export default function App() {
  return (
    <div className="relative flex h-[1080px] w-[1920px] flex-col overflow-hidden bg-white font-['Liberation_Sans',sans-serif]">
      <div className="flex h-[24px] shrink-0 items-center border-b border-[#c8dcf4] bg-white pl-[2px] text-[12px] text-[#8a8a8a]">
        <EpicorLogo />
        <span className="ml-[5px]">Method Directives</span>
        <Minus size={12} color="#888" strokeWidth={1} className="ml-auto" />
        <svg width="11" height="12" viewBox="0 0 11 12" className="ml-[33px]"><path d="M1 3h6v8H1zM3 3V1h6v8H7" fill="none" stroke="#888" /></svg>
        <X size={14} color="#888" strokeWidth={1} className="mr-[18px] ml-[33px]" />
      </div>
      <div className="flex h-[40px] shrink-0 items-center bg-[#fbeed5] pr-[24px] pl-[23px] font-['Open_Sans',sans-serif] text-[12.600px] text-[#7b5a12]">
        <div className="flex h-[20px] w-[20px] items-center justify-center rounded-full bg-[#f9c565] text-[13px] font-bold text-white">!</div>
        <span className="ml-[14px]">A new version of this form is available. To try out the new design and provide feedback, open</span>
        <span className="ml-[4px] text-[#3b9fd8] underline">the new Method Directives Maintenance app</span>
        <span className="text-[#3b9fd8]">.</span>
        <div className="ml-auto flex h-[25px] w-[55px] items-center justify-center bg-[#bebebe] text-[11px] text-[#222]">Snooze</div>
      </div>
      <MainToolbar />
      <div className="flex min-h-0 flex-1 bg-[#9dbfea]">
        <TreePanel />
        <div className="w-[5px] shrink-0 bg-[#94b5e0]" />
        <MethodPanel />
      </div>
      <div className="flex h-[20px] shrink-0 items-center bg-[#efefef] pt-[1px] pl-[3px] text-[12px] text-[#222]">Ready</div>
      <Taskbar />
      <BpmWindow />
    </div>
  )
}
